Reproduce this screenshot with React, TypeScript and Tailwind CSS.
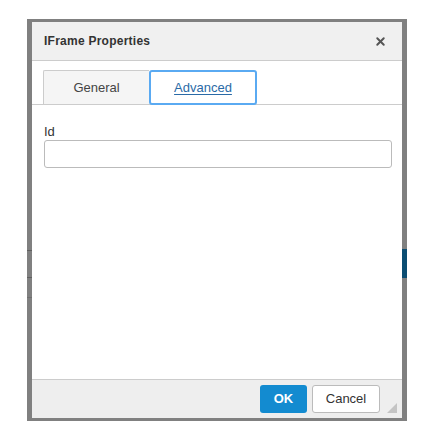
import { X } from 'lucide-react';

const font = { fontFamily: '"Liberation Sans", Arial, sans-serif' };

export default function App() {
  return (
    <div className="w-[447px] h-[435px] bg-white pt-[19px] pl-[27px]" style={font}>
      <div className="relative w-[380px] h-[402px] bg-[#808080] pt-[3px] px-[5px] pb-[3px] flex">
        {/* page behind the overlay peeking through */}
        <div className="absolute right-0 top-[230px] w-[5px] h-[29px] bg-[#0b4d72]" />
        <div className="absolute left-0 top-[231px] w-[5px] h-px bg-[#5f5f5f]" />
        <div className="absolute left-0 top-[258px] w-[5px] h-px bg-[#5f5f5f]" />
        <div className="absolute left-0 top-[278px] w-[5px] h-px bg-[#6f6f6f]" />

        <div className="flex flex-col w-full bg-white">
          <div className="h-[39px] shrink-0 bg-[#f0f0f0] border-b border-[#cccccc] flex items-center justify-between pl-[12px] pr-[15px]">
            <span className="text-[12px] font-bold text-[#333333] tracking-[0.25px]">IFrame Properties</span>
            <X size={13} strokeWidth={3.6} className="text-[#555555]" />
          </div>

          <div className="shrink-0 pt-[9px] border-b border-[#cccccc] flex pl-[11px]">
            <div className="w-[106px] h-[34px] -mb-px bg-[#f5f5f5] border-t border-l border-[#cccccc] rounded-tl-[2px] flex items-center justify-center text-[13px] text-[#444444]">
              General
            </div>
            <div className="w-[108px] h-[35px] -mb-px bg-white border-2 border-[#5aaaf2] rounded-[3px] flex items-center justify-center text-[13px] text-[#2a6aa6] underline underline-offset-2">
              Advanced
            </div>
          </div>

          <div className="flex-1 px-[12px] pt-[19px]">
            <div className="text-[13px] text-[#333333] leading-[15px]">Id</div>
            <div className="mt-[1px] w-[348px] h-[28px] border border-[#bbbbbb] rounded-[3px] bg-white" />
          </div>

          <div className="relative shrink-0 h-[39px] bg-[#eeeeee] border-t border-[#cccccc] flex justify-end items-start pt-[5px] pr-[22px] gap-[5px]">
            <button className="w-[47px] h-[28px] bg-[#138bd0] rounded-[3px] text-white text-[13px] font-bold">
              OK
            </button>
            <button className="w-[68px] h-[28px] bg-white border border-[#bbbbbb] rounded-[3px] text-[#333333] text-[13px]">
              Cancel
            </button>
            <svg className="absolute right-[5px] bottom-[5px]" width="10" height="10" viewBox="0 0 10 10">
              <polygon points="10,0 10,10 0,10" fill="#c4c4c4" />
            </svg>
          </div>
        </div>
      </div>
    </div>
  );
}
